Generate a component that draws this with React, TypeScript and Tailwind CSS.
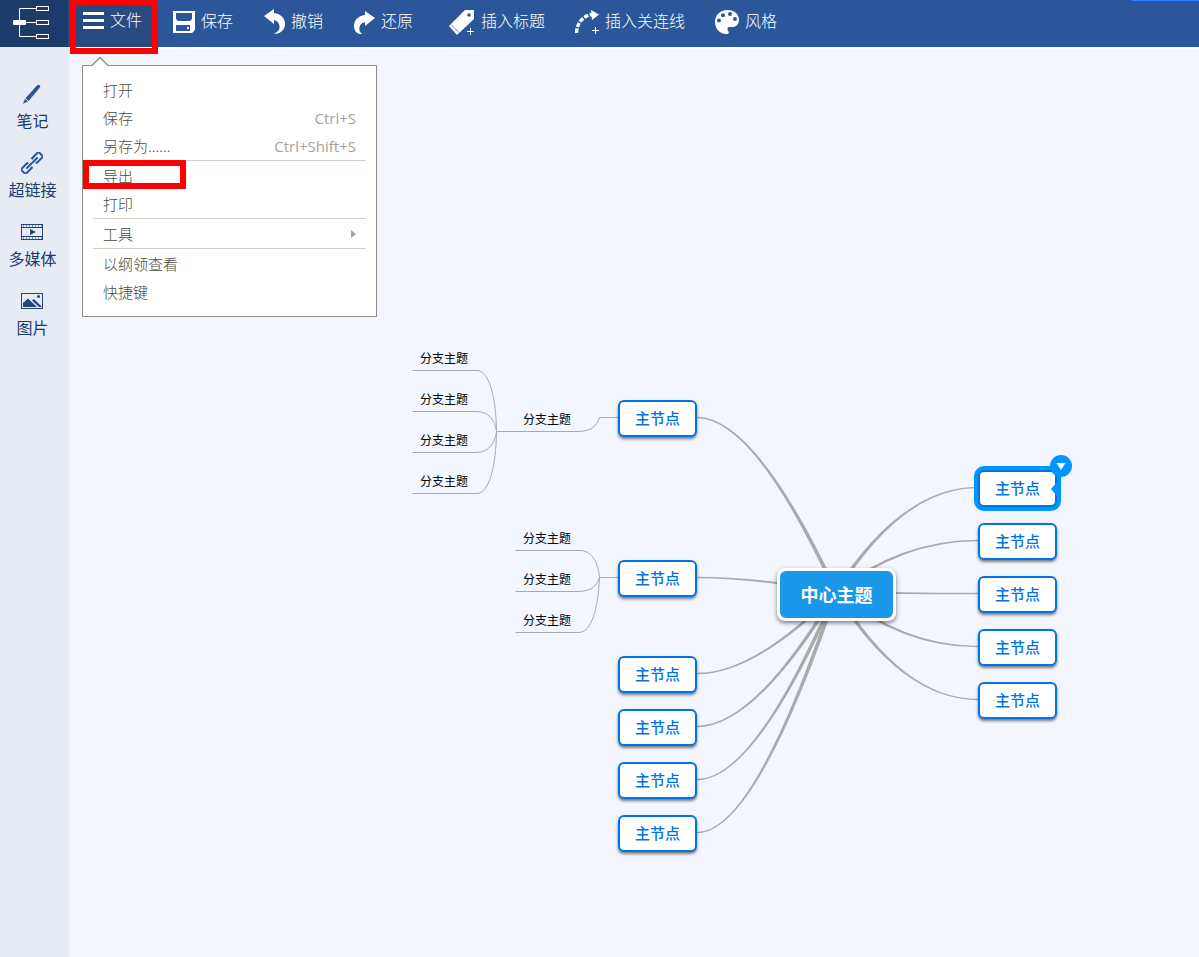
import React from 'react';

type Point = { x: number; y: number };

// Canvas coordinates of the central topic and the main nodes
const CENTER: Point = { x: 767, y: 542 };

const LEFT_NODES = [350, 510, 606, 659, 712, 765];
const RIGHT_NODES = [420, 473, 526, 579, 632];

const LEFT_X = 549;
const RIGHT_X = 909;
const NODE_W = 79;

const BRANCHES = [
  { x: 344, y: 299 },
  { x: 344, y: 340 },
  { x: 344, y: 381 },
  { x: 344, y: 422 },
  { x: 447, y: 360 },
  { x: 447, y: 479 },
  { x: 447, y: 520 },
  { x: 447, y: 561 },
];

const BRANCH_LINES = [
  'M343.5 320.5H408C420 321 427 346 427.500 381.5',
  'M343.5 361.5H408C419 362 426 369 427.5 381.5',
  'M343.5 402.5H408C419 402 426 394 427.5 381.5',
  'M343.5 443.5H408C420 443 427 417 427.5 381.5',
  'M427.5 381.5H510C522 381 528 376 530.5 367.5H549',
  'M446.5 500.5H510C522 500 529 511 530.5 527.5',
  'M446.5 541.5H510C522 541 528 536 530.5 527.5',
  'M446.5 582.5H510C522 582 529 561 530.5 527.5',
  'M530.5 527.5H549',
];

// Connector that is thick at the central topic and thin at the node
function taper(end: Point, ctrlX: number) {
  const dx = CENTER.x - ctrlX;
  const dy = CENTER.y - end.y;
  const len = Math.hypot(dx, dy) || 1;
  const nx = (-dy / len) * 2.2;
  const ny = (dx / len) * 1.5;
  const s = ny < 0 ? -0.7 : 0.7;
  return [
    `M${end.x} ${end.y + s}`,
    `Q${ctrlX + nx / 2} ${end.y + ny / 2} ${CENTER.x + nx} ${CENTER.y + ny}`,
    `L${CENTER.x - nx} ${CENTER.y - ny}`,
    `Q${ctrlX - nx / 2} ${end.y - ny / 2} ${end.x} ${end.y - s}Z`,
  ].join('');
}

const Logo = () => (
  <svg width="68" height="47" viewBox="0 0 68 47" fill="none" stroke="#fff">
    <path d="M36 8.5H19.500V36.5H36M19.5 22.5H36" />
    <rect x="36.5" y="6.5" width="12" height="4" />
    <rect x="36.5" y="20.5" width="12" height="4" />
    <rect x="36.5" y="34.5" width="12" height="4" />
    <rect x="13" y="20" width="13" height="5" rx="1" fill="#fff" stroke="none" />
  </svg>
);

const SaveIcon = () => (
  <svg width="22" height="22" viewBox="0 0 22 22" fill="#fff" fillRule="evenodd">
    <path d="M0 0H22V19L19 22H0ZM3 2V8L5 10H17L19 8V2ZM3 14V20H17V14ZM14 16H16V18H14Z" />
  </svg>
);

const UndoIcon = () => (
  <svg width="22" height="26" viewBox="0 0 22 26" fill="#fff">
    <path d="M1 7L11 0V4C18 5 22 9.500 22 15C22 21 17 25.500 10.500 24.500C15 23.500 17 20.500 16.500 17C16 13.500 14 11.500 11 11V15Z" />
  </svg>
);

const RedoIcon = () => (
  <svg width="22" height="26" viewBox="0 0 22 26" fill="#fff">
    <path d="M22 9L12 2V6C5 7 1 11.500 1 17C1 20.500 3 24.500 7 25H9C6.500 23 6 21 6.500 18.500C7 15.500 9 13.500 12 13V17Z" />
  </svg>
);

const TagIcon = () => (
  <svg width="32" height="28" viewBox="0 0 32 28">
    <path d="M31 2H22L6 18L14 27L31 11Z" fill="#fff" />
    <circle cx="26" cy="7" r="1.8" fill="#2b579a" />
    <path d="M8 16.500L16 24.500" stroke="#2b579a" strokeDasharray="1.500 .5" />
    <path d="M27.500 20V27M24 23.500H31" stroke="#fff" />
  </svg>
);

const RelationIcon = () => (
  <svg width="24" height="28" viewBox="0 0 24 28" fill="none" stroke="#fff">
    <path d="M1.500 25C2 15 8 7.500 17 6.500" strokeWidth="3.400" strokeDasharray="4.500 1.500" />
    <path d="M16 2L24 6.500L17 12Z" fill="#fff" stroke="none" />
    <path d="M20.500 19V26M17 22.500H24" />
  </svg>
);

const PaletteIcon = () => (
  <svg width="24" height="24" viewBox="0 0 24 24" fill="#fff">
    <path d="M12.500 0C5 0 0 5 0 12C0 18.500 5 24 11 24C14 24 14.500 22.500 13 20.500C11.500 18 13 16.500 16 17C21 17.500 24 14.500 24 10C24 4 19 0 12.500 0Z" />
    <g fill="#2b579a">
      <circle cx="4" cy="10.500" r="2" />
      <circle cx="8" cy="5.200" r="2" />
      <circle cx="15" cy="4" r="2" />
      <circle cx="20" cy="9" r="2" />
    </g>
  </svg>
);

const PenIcon = () => (
  <svg width="22" height="22" viewBox="0 0 22 22" fill="#2b579a">
    <path d="M15.500 3L17 1.700Q18 1.500 19.200 3Q19.500 4 18.500 5L7.500 18L4.500 15.200Z" />
    <path d="M4 15.800L6.900 18.500L2 20.700Z" />
  </svg>
);

const ChainIcon = () => (
  <svg width="22" height="22" viewBox="0 0 22 22" fill="none" stroke="#2b579a" strokeWidth="2">
    <g transform="rotate(-45 11 11)">
      <path d="M5.500 7.700H-1.500V14.300H7.500V13M5.500 7.700H7.500V9" />
      <path d="M16.500 7.700H23.500V14.300H14.500V13M16.500 7.700H14.500V9" />
      <path d="M3 11H9.500M12.500 11H19M9 11H13" />
    </g>
  </svg>
);

const VideoIcon = () => (
  <svg width="22" height="22" viewBox="0 0 22 22" fill="none" stroke="#24457c">
    <rect x=".5" y="3.500" width="21" height="15" />
    <path d="M1 6.500H21M1 15.500H21" />
    <path d="M2 5H21M2 17H21" strokeDasharray="1 2" />
    <path d="M9 8L15 11L9 14Z" fill="#24457c" stroke="none" />
  </svg>
);

const ImageIcon = () => (
  <svg width="22" height="22" viewBox="0 0 22 22" fill="#24457c">
    <rect x=".5" y="3.500" width="21" height="15" fill="none" stroke="#24457c" />
    <path d="M2 17V13L7 8.500L16 17ZM11 10.500L13 9L21 17H18Z" />
    <circle cx="17.500" cy="6.500" r="1.500" />
  </svg>
);

const TOOLS = [
  { label: '保存', icon: <SaveIcon /> },
  { label: '撤销', icon: <UndoIcon /> },
  { label: '还原', icon: <RedoIcon /> },
  { label: '插入标题', icon: <TagIcon /> },
  { label: '插入关连线', icon: <RelationIcon /> },
  { label: '风格', icon: <PaletteIcon /> },
];

const SIDE_ITEMS = [
  { label: '笔记', icon: <PenIcon /> },
  { label: '超链接', icon: <ChainIcon /> },
  { label: '多媒体', icon: <VideoIcon /> },
  { label: '图片', icon: <ImageIcon /> },
];

type Item = { label: string; shortcut?: string; submenu?: boolean; marked?: boolean };

const MENU: Item[][] = [
  [{ label: '打开' }, { label: '保存', shortcut: 'Ctrl+S' }, { label: '另存为......', shortcut: 'Ctrl+Shift+S' }],
  [{ label: '导出', marked: true }, { label: '打印' }],
  [{ label: '工具', submenu: true }],
  [{ label: '以纲领查看' }, { label: '快捷键' }],
];

function FileMenu() {
  return (
    <div className="absolute left-3 top-[65px] z-20 w-[295px] border border-[#8b8c83] bg-white p-[10px]">
      <svg className="absolute left-2 -top-[10px]" width="18" height="11" viewBox="0 0 18 11">
        <path d="M0 11V10L9 1L18 10V11Z" fill="#fff" />
        <path d="M.5 10L9 1.500L17.500 10" fill="none" stroke="#8b8c83" strokeWidth="1.300" />
      </svg>
      {MENU.map((group, i) => (
        <React.Fragment key={i}>
          {i > 0 && <hr className="mb-px h-px border-0 bg-[#d3d3c6]" />}
          {group.map((item) => (
            <button
              key={item.label}
              className="relative flex h-7 w-full items-center justify-between px-[10px] text-[15px] leading-7 font-light text-[#4c4c42]"
            >
              <span>{item.label}</span>
              {item.shortcut && (
                <span className="font-['Open_Sans','Noto_Sans',sans-serif] text-[15px] font-normal text-[#a3a499]">
                  {item.shortcut}
                </span>
              )}
              {item.submenu && (
                <svg width="5" height="8" viewBox="0 0 5 8" fill="#a3a499">
                  <path d="M0 0L5 4L0 8Z" />
                </svg>
              )}
              {item.marked && (
                <span className="absolute -left-[10px] -top-[2px] h-[29px] w-[103px] border-[6px] border-[#ff0000]" />
              )}
            </button>
          ))}
        </React.Fragment>
      ))}
    </div>
  );
}

function Header() {
  return (
    <header className="relative flex h-[47px] bg-[#2b579a] text-white">
      <div className="w-[70px] shrink-0 border-r-2 border-[#264a7f] bg-[#1c3a6a]">
        <Logo />
      </div>
      <div className="relative w-[88px] shrink-0">
        <button className="flex h-full w-full items-center gap-1.5 bg-[#284a80] pb-1.5 pl-[13px]">
          <svg width="21" height="17" viewBox="0 0 21 17" fill="#fff">
            <path d="M0 0H21V3H0ZM0 7H21V10H0ZM0 14H21V17H0Z" />
          </svg>
          <span className="whitespace-nowrap pb-1 font-light">文件</span>
        </button>
        <span className="pointer-events-none absolute left-0 top-0 z-10 h-[54px] w-[88px] border-[6px] border-t-[5px] border-[#ff0000]" />
        <FileMenu />
      </div>
      <nav className="ml-[15px] flex items-center gap-[30px] pb-1">
        {TOOLS.map((tool) => (
          <button key={tool.label} className="flex items-center gap-1.5 whitespace-nowrap">
            {tool.icon}
            <span className="pb-1 font-light">{tool.label}</span>
          </button>
        ))}
      </nav>
      <span className="absolute right-0 top-0 h-px w-[67px] bg-[#2d83ff]" />
    </header>
  );
}

function Sidebar() {
  return (
    <aside className="flex w-[69px] shrink-0 flex-col items-center gap-5 bg-[#e6ebf4] pr-1 pt-9 text-[#1c3a6a]">
      {SIDE_ITEMS.map((item) => (
        <button key={item.label} className="flex flex-col items-center gap-[3px]">
          {item.icon}
          <span className="whitespace-nowrap">{item.label}</span>
        </button>
      ))}
    </aside>
  );
}

function MainNode({ x, y, selected }: Point & { selected?: boolean }) {
  return (
    <button
      className={`absolute flex h-[37px] w-[79px] items-center justify-center rounded-md border-2 border-[#0073e6] bg-white text-[15px] font-medium text-[#0073e6] ${
        selected ? 'ring-4 ring-[#0096ff]' : 'shadow-[0_2px_3px_rgba(0,0,0,0.5)]'
      }`}
      style={{ left: x, top: y }}
    >
      主节点
      {selected && (
        <>
          <svg className="absolute -right-[2px] top-[10px]" width="6" height="14" viewBox="0 0 6 14" fill="#0096ff">
            <path d="M6 0L0 7L6 14Z" />
          </svg>
          <svg className="absolute -right-[17px] -top-[17px]" width="22" height="22" viewBox="0 0 22 22">
            <circle cx="11" cy="11" r="11" fill="#0096ff" />
            <path d="M6.500 8H15.500L11 15Z" fill="#fff" />
          </svg>
        </>
      )}
    </button>
  );
}

function MindMap() {
  return (
    <main className="relative min-h-[820px] flex-1 overflow-hidden border-t-[3px] border-white bg-[#f3f6ff]">
      <svg className="absolute left-0 top-0 h-full w-full">
        <g fill="#a9abaa">
          {LEFT_NODES.map((y) => (
            <path key={y} d={taper({ x: LEFT_X + NODE_W, y: y + 17.5 }, 686)} />
          ))}
          {RIGHT_NODES.map((y) => (
            <path key={y} d={taper({ x: RIGHT_X, y: y + 17.5 }, 833)} />
          ))}
        </g>
        <g fill="none" stroke="#a9abaa">
          {BRANCH_LINES.map((d) => (
            <path key={d} d={d} />
          ))}
        </g>
      </svg>

      {BRANCHES.map(({ x, y }) => (
        <span
          key={`${x}-${y}`}
          className="absolute w-[62px] text-center text-xs leading-[18px] text-black"
          style={{ left: x, top: y }}
        >
          分支主题
        </span>
      ))}

      {LEFT_NODES.map((y) => (
        <MainNode key={y} x={LEFT_X} y={y} />
      ))}
      {RIGHT_NODES.map((y, i) => (
        <MainNode key={y} x={RIGHT_X} y={y} selected={i === 0} />
      ))}

      <button className="absolute left-[708px] top-[518px] flex h-[53px] w-[119px] items-center justify-center rounded-lg bg-white p-[3px] text-lg font-bold text-white shadow-[0_2px_4px_rgba(0,0,0,0.5)]">
        <span className="flex h-full w-full items-center justify-center rounded-md bg-[#1a97e8] pb-0.5">中心主题</span>
      </button>
    </main>
  );
}

export default function App() {
  return (
    <div className="flex min-h-screen flex-col font-['Noto_Sans_CJK_SC',sans-serif] text-base">
      <Header />
      <div className="flex flex-1">
        <Sidebar />
        <MindMap />
      </div>
    </div>
  );
}
